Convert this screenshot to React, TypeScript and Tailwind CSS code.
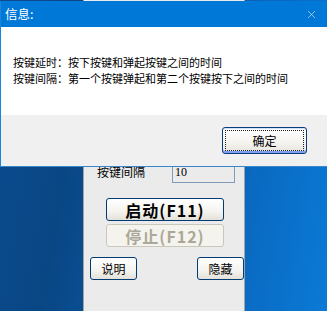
import { X } from 'lucide-react';

const cjk = "font-['Noto_Sans_CJK_SC','Noto_Sans',sans-serif]";

// classic XP-looking push button used by the old tool window behind the dialog
function XpButton({
  children,
  disabled,
  className = '',
}: {
  children: React.ReactNode;
  disabled?: boolean;
  className?: string;
}) {
  return (
    <button
      type="button"
      className={
        disabled
          ? `flex items-center justify-center rounded-[3px] border border-[#cac8bb] bg-[#f4f3ee] text-[#aca899] ${className}`
          : `flex items-center justify-center rounded-[3px] border border-[#003c74] bg-[linear-gradient(#ffffff,#f4f3ef_60%,#e3e1d8)] text-black ${className}`
      }
    >
      {children}
    </button>
  );
}

function BackWindow() {
  return (
    <div className={`ml-[83px] flex h-full w-[162px] flex-col border-x border-[#a3a3a3] bg-[#ebebeb] ${cjk}`}>
      {/* rows above this point sit under the message box */}
      <div className="mt-[161px] flex h-[22px] items-center">
        <span className="ml-[13px] w-[75px] text-[12px] leading-none text-black">按键间隔</span>
        <div className="flex h-[22px] w-[63px] items-center border border-[#7f9db9] bg-[#ebebeb] pl-[2px] font-['Liberation_Serif',serif] text-[12px] text-black">
          10
        </div>
      </div>
      <XpButton className="ml-[22px] mt-[15px] h-[23px] w-[118px] text-[16px] font-bold leading-none tracking-[1px]">
        启动(F11)
      </XpButton>
      <XpButton disabled className="ml-[22px] mt-[3px] h-[23px] w-[118px] text-[16px] font-bold leading-none tracking-[1px]">
        停止(F12)
      </XpButton>
      <div className="mt-[10px] flex justify-between pl-[6px] pr-0">
        <XpButton className="h-[23px] w-[47px] text-[12px] leading-none">说明</XpButton>
        <XpButton className="h-[23px] w-[47px] text-[12px] leading-none">隐藏</XpButton>
      </div>
    </div>
  );
}

function MessageBox() {
  return (
    <div className={`absolute left-0 top-[1px] flex w-[327px] flex-col border-l border-[#1a84d8] shadow-[0_1px_0_#3b86c8] ${cjk}`}>
      <div className="flex h-[26px] items-center justify-between bg-[#0078d7] pl-[4px] pr-[9px] text-white">
        <span className="text-[12.5px] leading-none">信息:</span>
        <X className="h-[13px] w-[13px]" strokeWidth={1} />
      </div>
      <div className="flex h-[88px] flex-col bg-white pl-[12px] pt-[27px] text-[11px] leading-[16px] text-black">
        <span>按键延时：按下按键和弹起按键之间的时间</span>
        <span>按键间隔：第一个按键弹起和第二个按键按下之间的时间</span>
      </div>
      <div className="flex h-[51px] items-start justify-end bg-[#f0f0f0] pr-[20px] pt-[12px]">
        <button
          type="button"
          className="relative flex h-[27px] w-[85px] items-center justify-center rounded-[3px] border border-[#0b3d7a] bg-[linear-gradient(#ffffff,#f4f3ef_60%,#e6e4dc)] text-[12px] text-black shadow-[inset_0_-2px_0_#7f9ff0,inset_0_1px_0_#cfe0ff]"
        >
          <span className="absolute inset-[2px] border border-dotted border-[#222]" />
          确定
        </button>
      </div>
    </div>
  );
}

export default function App() {
  return (
    <div className="relative h-[311px] w-[327px] overflow-hidden bg-[linear-gradient(100deg,#0b4c90_0%,#094684_25%,#0a66bd_70%,#0a7ad6_100%)]">
      <BackWindow />
      <MessageBox />
    </div>
  );
}
